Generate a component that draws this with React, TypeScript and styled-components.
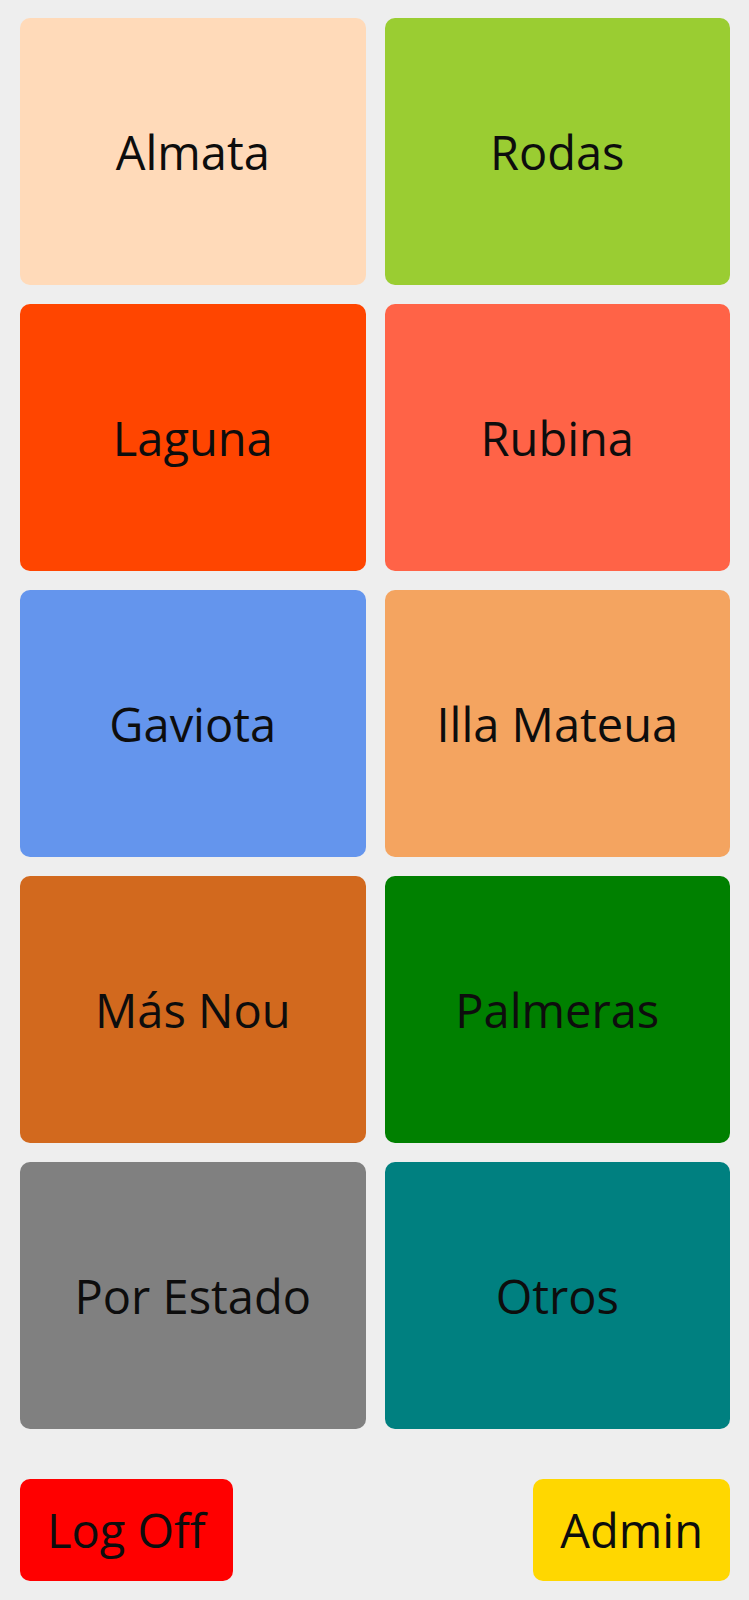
import React from "react";
import styled, { createGlobalStyle } from "styled-components";

const GlobalStyle = createGlobalStyle`
  html, body {
    margin: 0;
    padding: 0;
    background: #eeeeee;
  }
  body {
    font-family: "Open Sans", "Noto Sans", sans-serif;
  }
`;

const Page = styled.div`
  padding: 18px 19px 20px 20px;
  box-sizing: border-box;
  width: 749px;
  min-height: 1600px;
  background: #eeeeee;
`;

const Grid = styled.div`
  display: grid;
  grid-template-columns: 1fr 1fr;
  grid-auto-rows: 267px;
  gap: 19px;
`;

const Tile = styled.button<{ $bg: string }>`
  background: ${(p) => p.$bg};
  border: none;
  border-radius: 10px;
  display: flex;
  align-items: center;
  justify-content: center;
  font-family: "Open Sans", "Noto Sans", sans-serif;
  font-size: 47px;
  color: #0d0d0d;
  padding: 0;
  cursor: pointer;
`;

const Footer = styled.div`
  margin-top: 50px;
  display: flex;
  justify-content: space-between;
  align-items: center;
`;

const ActionButton = styled.button<{ $bg: string }>`
  background: ${(p) => p.$bg};
  border: none;
  border-radius: 10px;
  height: 102px;
  padding: 0 27px;
  font-family: "Open Sans", "Noto Sans", sans-serif;
  font-size: 47px;
  color: #0d0d0d;
  cursor: pointer;
`;

const tiles: { label: string; color: string }[] = [
  { label: "Almata", color: "#FFDAB9" },
  { label: "Rodas", color: "#9ACD32" },
  { label: "Laguna", color: "#FF4500" },
  { label: "Rubina", color: "#FF6347" },
  { label: "Gaviota", color: "#6495ED" },
  { label: "Illa Mateua", color: "#F4A460" },
  { label: "Más Nou", color: "#D2691E" },
  { label: "Palmeras", color: "#008000" },
  { label: "Por Estado", color: "#808080" },
  { label: "Otros", color: "#008080" },
];

export default function App() {
  return (
    <>
      <GlobalStyle />
      <Page>
        <Grid>
          {tiles.map((t) => (
            <Tile key={t.label} $bg={t.color}>
              {t.label}
            </Tile>
          ))}
        </Grid>
        <Footer>
          <ActionButton $bg="#FF0000">Log Off</ActionButton>
          <ActionButton $bg="#FFD700">Admin</ActionButton>
        </Footer>
      </Page>
    </>
  );
}
